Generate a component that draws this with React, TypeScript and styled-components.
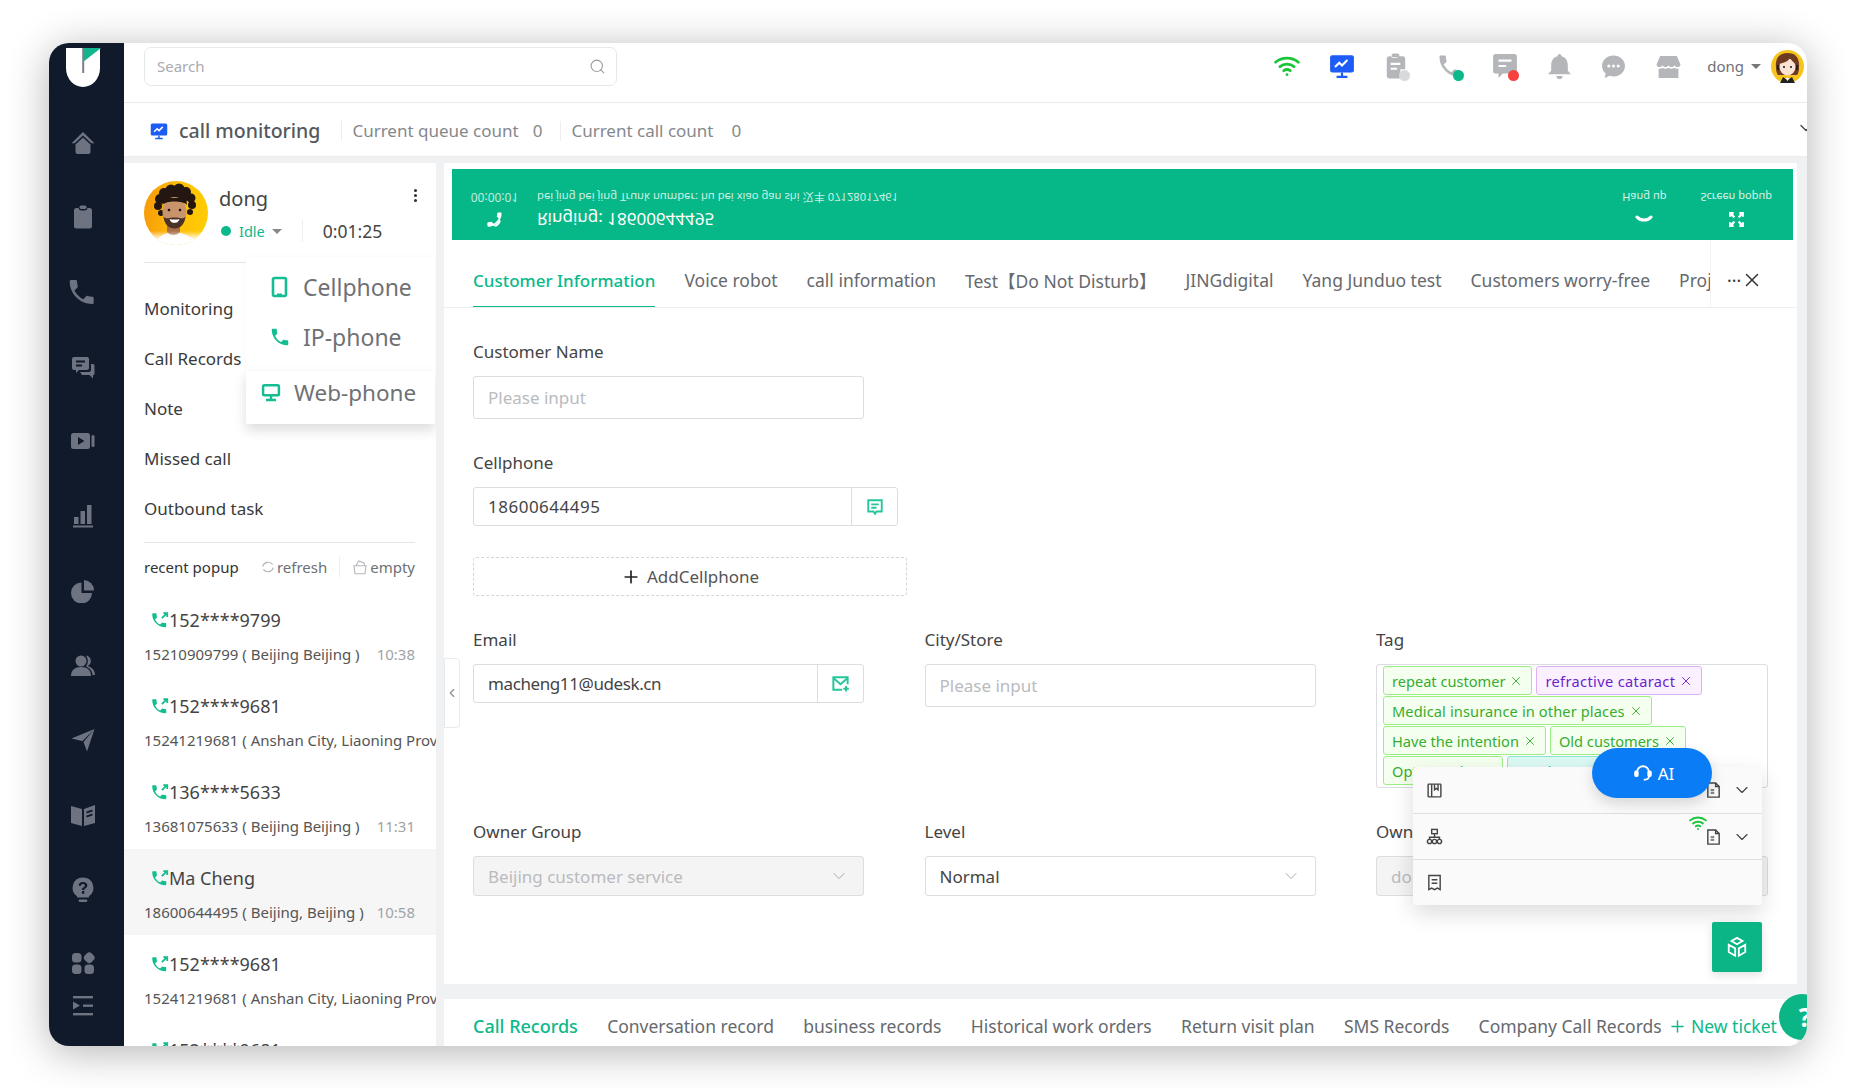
import React from 'react';
import styled, { createGlobalStyle } from 'styled-components';
import { ChevronDown, ChevronLeft, Plus, X, Search as SearchIcon } from 'lucide-react';

const GREEN = '#0bb98a';

const GlobalStyle = createGlobalStyle`
  html, body { margin: 0; padding: 0; background: #fff; }
  body { font-family: "Noto Sans", "Noto Sans CJK SC", sans-serif; color: #333; }
  * { box-sizing: border-box; }
`;

const Page = styled.div`
  width: 1856px;
  height: 1088px;
  padding: 43px 0 0 49px;
  overflow: hidden;
`;

const Window = styled.div`
  position: relative;
  display: flex;
  width: 1758px;
  height: 1003px;
  border-radius: 20px;
  overflow: hidden;
  background: #f0f1f3;
  box-shadow: 0 6px 42px rgba(0, 0, 0, 0.3);
`;

const Sidebar = styled.aside`
  width: 75px;
  flex: none;
  background: #111a2b;
  display: flex;
  flex-direction: column;
  align-items: center;
  padding-right: 7px;
  color: #6d7380;
`;

const Logo = styled.div`
  height: 62px;
  padding-top: 5px;
`;

const NavItem = styled.div<{ $h?: number }>`
  height: ${(p) => p.$h ?? 74.7}px;
  flex: none;
  display: flex;
  align-items: center;
  justify-content: center;
`;

const Content = styled.div`
  flex: 1;
  min-width: 0;
  display: flex;
  flex-direction: column;
`;

const Topbar = styled.header`
  height: 60px;
  flex: none;
  background: #fff;
  border-bottom: 1px solid #e9eaec;
  display: flex;
  align-items: center;
  padding: 0 3px 13px 20px;
`;

const SearchBox = styled.div`
  width: 473px;
  height: 39px;
  border: 1px solid #e6e7e9;
  border-radius: 7px;
  display: flex;
  align-items: center;
  justify-content: space-between;
  padding: 0 10px 0 12px;
  font-size: 15px;
  color: #a9abae;
`;

const TopIcons = styled.div`
  margin-left: auto;
  display: flex;
  align-items: center;
`;

const TopIcon = styled.div`
  position: relative;
  width: 54.4px;
  height: 30px;
  display: flex;
  align-items: center;
  justify-content: center;
`;

const Badge = styled.span<{ $color: string }>`
  position: absolute;
  left: 30px;
  top: 19px;
  width: 11px;
  height: 11px;
  border-radius: 50%;
  background: ${(p) => p.$color};
`;

const UserName = styled.div`
  display: flex;
  align-items: center;
  gap: 7px;
  margin-left: 12px;
  margin-right: 10px;
  font-size: 15px;
  color: #6f7276;
`;

const Caret = styled.span<{ $color?: string }>`
  width: 0;
  height: 0;
  border-left: 5px solid transparent;
  border-right: 5px solid transparent;
  border-top: 5px solid ${(p) => p.$color ?? '#777'};
`;

const TitleRow = styled.div`
  height: 54px;
  flex: none;
  background: #fff;
  display: flex;
  align-items: center;
  padding: 2px 0 0 26px;
  color: #85888c;
  font-size: 17px;
  border-bottom: 1px solid #ececee;
`;

const PageTitle = styled.div`
  margin-left: 11px;
  font-size: 19.5px;
  font-weight: 500;
  color: #55585c;
  margin-right: 21px;
`;

const Counter = styled.div<{ $gap: number }>`
  display: flex;
  gap: ${(p) => p.$gap}px;
  padding-left: 10px;
  margin-right: 18px;
  border-left: 1px solid #eeeeee;
  line-height: 20px;
`;

const CollapseMark = styled.div`
  margin-left: auto;
  margin-right: -9px;
  margin-bottom: 5px;
  color: #444;
  display: flex;
`;

const Body = styled.div`
  flex: 1;
  min-height: 0;
  margin-top: 6px;
  display: flex;
`;

const LeftPanel = styled.section`
  position: relative;
  width: 312px;
  flex: none;
  background: #fff;
  overflow: hidden;
`;

const Profile = styled.div`
  height: 100px;
  margin: 0 21px 0 20px;
  padding-top: 18px;
  border-bottom: 1px solid #e4e5e7;
  display: flex;
  position: relative;
`;

const Kebab = styled.div`
  position: absolute;
  right: -2px;
  top: 26px;
  display: flex;
  flex-direction: column;
  gap: 2px;
  & > i {
    width: 3px;
    height: 3px;
    border-radius: 50%;
    background: #333;
  }
`;

const ProfileText = styled.div`
  margin-left: 11px;
`;

const ProfileName = styled.div`
  font-size: 20px;
  line-height: 28px;
  margin-top: 4px;
  color: #444;
`;

const StatusRow = styled.div`
  display: flex;
  align-items: center;
  margin-top: 6px;
  height: 24px;
`;

const StatusDot = styled.span`
  width: 10px;
  height: 10px;
  border-radius: 50%;
  background: ${GREEN};
  margin-left: 2px;
  margin-right: 8px;
`;

const StatusLabel = styled.span`
  font-size: 14.5px;
  color: ${GREEN};
  margin-right: 7px;
`;

const Timer = styled.span`
  margin-left: 20px;
  padding-left: 20px;
  border-left: 1px solid #eeeeee;
  font-size: 17.5px;
  line-height: 22px;
  color: #444;
`;

const Menu = styled.nav`
  margin: 0 21px 0 20px;
  padding: 21px 0 9px;
  border-bottom: 1px solid #e4e5e7;
`;

const MenuItem = styled.div`
  height: 49.8px;
  display: flex;
  align-items: center;
  font-size: 17px;
  color: #3a3a3a;
`;

const RecentHead = styled.div`
  height: 48px;
  margin: 0 21px 0 20px;
  display: flex;
  align-items: center;
  font-size: 15px;
  color: #333;
  white-space: nowrap;
`;

const RecentTool = styled.div<{ $sep?: boolean }>`
  display: flex;
  align-items: center;
  gap: 2px;
  color: #6d7074;
  font-size: 15px;
  margin-left: ${(p) => (p.$sep ? '12px' : 'auto')};
  padding-left: ${(p) => (p.$sep ? '12px' : '0')};
  border-left: ${(p) => (p.$sep ? '1px solid #eeeeee' : 'none')};
`;

const CallList = styled.div`
  display: flex;
  flex-direction: column;
`;

const CallItem = styled.div<{ $active?: boolean }>`
  height: 86px;
  flex: none;
  padding: 17px 21px 0 20px;
  background: ${(p) => (p.$active ? '#f6f6f7' : '#fff')};
`;

const CallTitle = styled.div`
  display: flex;
  align-items: center;
  padding-left: 8px;
  height: 24px;
  font-size: 18px;
  color: #444;
`;

const CallSub = styled.div`
  margin-top: 11px;
  margin-right: -21px;
  display: flex;
  justify-content: space-between;
  font-size: 15px;
  line-height: 22px;
  color: #555;
  white-space: nowrap;
  overflow: hidden;
`;

const CallTime = styled.span`
  color: #a0a3a6;
  margin-right: 21px;
`;

const PhoneMenu = styled.div`
  position: absolute;
  left: 122px;
  top: 94px;
  width: 189px;
  font-size: 23px;
  color: #6f7175;
`;

const PhoneMenuTop = styled.div`
  background: #fff;
  height: 114px;
  padding: 5px 0 0 25px;
  box-shadow: 0 0 6px rgba(0, 0, 0, 0.03);
`;

const PhoneMenuRow = styled.div`
  height: 50px;
  display: flex;
  align-items: center;
  gap: 15px;
`;

const PhoneMenuIcon = styled.span`
  width: 17px;
  flex: none;
  display: flex;
  justify-content: center;
  & > svg { flex: none; }
`;

const PhoneMenuBottom = styled.div`
  background: #fff;
  height: 53px;
  padding: 0 0 11px 15px;
  display: flex;
  align-items: center;
  gap: 13px;
  font-size: 22.5px;
  box-shadow: 0 6px 12px rgba(0, 0, 0, 0.14);
`;

const Main = styled.main`
  position: relative;
  margin-left: 8px;
  margin-right: 10px;
  flex: 1;
  min-width: 0;
  background: #fff;
  display: flex;
  flex-direction: column;
`;

const CollapseHandle = styled.div`
  position: absolute;
  left: 0;
  top: 495px;
  width: 16px;
  height: 70px;
  background: #fff;
  border: 1px solid #e8e9eb;
  border-radius: 0 4px 4px 0;
  color: #8a8c90;
  display: flex;
  align-items: center;
  justify-content: center;
`;

const Banner = styled.div`
  margin: 6px 4px 0 8px;
  height: 71px;
  flex: none;
  background: #06b888;
  color: #fff;
  display: flex;
  padding: 0 21px;
`;

const Flip = styled.div<{ $size: number; $alpha?: number }>`
  transform: scaleY(-1);
  font-size: ${(p) => p.$size}px;
  line-height: 22px;
  white-space: nowrap;
  color: rgba(255, 255, 255, ${(p) => p.$alpha ?? 1});
`;

const BannerCol = styled.div<{ $w?: number; $center?: boolean }>`
  width: ${(p) => (p.$w ? `${p.$w}px` : 'auto')};
  padding-top: 17px;
  display: flex;
  flex-direction: column;
  align-items: ${(p) => (p.$center ? 'center' : 'flex-start')};
`;

const BannerInfo = styled(BannerCol)`
  margin-left: 21px;
`;

const BannerActions = styled.div`
  margin-left: auto;
  display: flex;
  gap: 34px;
`;

const BannerIcon = styled.div`
  height: 22px;
  display: flex;
  align-items: center;
  justify-content: center;
`;

const Tabs = styled.div`
  height: 68px;
  flex: none;
  border-bottom: 1px solid #eeeff0;
  padding: 14px 0 0 29px;
  display: flex;
  gap: 29px;
  position: relative;
  overflow: hidden;
  font-size: 17.5px;
  color: #66696d;
  white-space: nowrap;
`;

const Tab = styled.div<{ $active?: boolean }>`
  height: 54px;
  display: flex;
  align-items: center;
  font-size: ${(p) => (p.$active ? 17 : 17.5)}px;
  font-weight: ${(p) => (p.$active ? 500 : 400)};
  color: ${(p) => (p.$active ? GREEN : 'inherit')};
  border-bottom: 2px solid ${(p) => (p.$active ? GREEN : 'transparent')};
`;

const TabTail = styled.div`
  position: absolute;
  right: 0;
  top: 0;
  bottom: 0;
  width: 87px;
  background: #fff;
  border-left: 1px solid #f4f4f5;
  display: flex;
  align-items: center;
  padding: 12px 0 0 16px;
  color: #333;
`;

const Form = styled.div`
  flex: 1;
  min-height: 0;
  padding: 34px 0 0 29px;
  overflow: hidden;
`;

const FormGrid = styled.div<{ $mt?: number }>`
  display: grid;
  grid-template-columns: 391px 391px 392px;
  column-gap: 60.5px;
  margin-top: ${(p) => p.$mt ?? 0}px;
`;

const Label = styled.div`
  font-size: 17px;
  line-height: 20px;
  color: #444;
  margin-bottom: 14px;
  white-space: nowrap;
`;

const Input = styled.div<{ $disabled?: boolean; $placeholder?: boolean; $h?: number }>`
  height: ${(p) => p.$h ?? 43}px;
  border: 1px solid #dcdde0;
  border-radius: 3px;
  padding: 0 14px;
  display: flex;
  align-items: center;
  justify-content: space-between;
  font-size: 17px;
  background: ${(p) => (p.$disabled ? '#f4f4f5' : '#fff')};
  color: ${(p) => (p.$placeholder || p.$disabled ? '#b9bbbe' : '#444')};
`;

const InputGroup = styled.div<{ $w: number; $addon: number }>`
  width: ${(p) => p.$w}px;
  height: 39px;
  border: 1px solid #dcdde0;
  border-radius: 3px;
  display: grid;
  grid-template-columns: 1fr ${(p) => p.$addon}px;
  font-size: 17px;
  color: #444;
`;

const InputValue = styled.div<{ $spacing?: number }>`
  display: flex;
  align-items: center;
  padding-left: 14px;
  letter-spacing: ${(p) => p.$spacing ?? 0}px;
`;

const InputAddon = styled.div`
  border-left: 1px solid #dcdde0;
  display: flex;
  align-items: center;
  justify-content: center;
`;

const AddButton = styled.div`
  width: 434px;
  height: 39px;
  margin-top: 31px;
  border: 1px dashed #d4d5d8;
  border-radius: 3px;
  display: flex;
  align-items: center;
  justify-content: center;
  gap: 6px;
  font-size: 17px;
  color: #555;
`;

const TagBox = styled.div`
  height: 124px;
  border: 1px solid #dcdde0;
  border-radius: 3px;
  padding: 1px 6px;
  display: flex;
  flex-wrap: wrap;
  align-content: flex-start;
  gap: 1px 4px;
  overflow: hidden;
`;

const TagItem = styled.div<{ $fg: string; $bg: string; $line: string; $ls?: number }>`
  height: 29px;
  padding: 0 8px;
  border: 1px solid ${(p) => p.$line};
  border-radius: 3px;
  background: ${(p) => p.$bg};
  color: ${(p) => p.$fg};
  font-size: 14.6px;
  letter-spacing: ${(p) => p.$ls ?? 0}px;
  display: flex;
  align-items: center;
  gap: 4px;
  white-space: nowrap;
`;

const Divider = styled.div`
  height: 15px;
  flex: none;
  background: #f0f1f3;
`;

const BottomBar = styled.div`
  height: 47px;
  flex: none;
  display: flex;
  align-items: center;
  padding: 7px 0 0 29px;
  position: relative;
  overflow: hidden;
  font-size: 17.5px;
  color: #66696d;
  white-space: nowrap;
  gap: 29.3px;
`;

const BottomTab = styled.div<{ $active?: boolean }>`
  font-size: ${(p) => (p.$active ? 18 : 17.5)}px;
  font-weight: ${(p) => (p.$active ? 500 : 400)};
  color: ${(p) => (p.$active ? GREEN : 'inherit')};
`;

const NewTicket = styled.div`
  position: absolute;
  left: 1222px;
  top: 0;
  bottom: 0;
  padding: 7px 0 0 2px;
  display: flex;
  align-items: center;
  gap: 4px;
  background: #fff;
  color: ${GREEN};
  font-size: 17.5px;
`;

const FloatPanel = styled.div`
  position: absolute;
  left: 969px;
  top: 604px;
  width: 349px;
  background: #fafafa;
  box-shadow: 0 8px 22px rgba(0, 0, 0, 0.14);
  border-radius: 3px;
`;

const FloatRow = styled.div`
  height: 46px;
  display: flex;
  align-items: center;
  padding: 0 10px 0 13px;
  gap: 10px;
  position: relative;
  color: #444;
  & + & { border-top: 1px solid #dedfe1; }
`;

const FloatSpacer = styled.div`
  flex: 1;
`;

const FloatWifi = styled.div`
  position: absolute;
  left: 276px;
  top: 0;
`;

const AiButton = styled.div`
  position: absolute;
  left: 1148px;
  top: 585px;
  width: 120px;
  height: 50px;
  border-radius: 25px;
  background: #0a7cf5;
  color: #fff;
  font-size: 17px;
  display: flex;
  align-items: center;
  justify-content: center;
  gap: 6px;
  padding-left: 4px;
  box-shadow: 0 6px 14px rgba(0, 0, 0, 0.14);
`;

const CubeButton = styled.div`
  position: absolute;
  left: 1268px;
  top: 759px;
  width: 50px;
  height: 50px;
  background: #0bb586;
  border-radius: 2px;
  display: flex;
  align-items: center;
  justify-content: center;
  box-shadow: 0 3px 10px rgba(0, 0, 0, 0.12);
`;

const HelpCircle = styled.div`
  position: absolute;
  left: 1730px;
  top: 951px;
  width: 46px;
  height: 46px;
  border-radius: 50%;
  background: #0bb586;
  color: #fff;
  font-size: 26px;
  font-weight: 700;
  display: flex;
  align-items: center;
  justify-content: center;
  padding-left: 6px;
`;

const Svg: React.FC<{ size?: number; h?: number; color?: string; children: React.ReactNode }> = ({
  size = 24,
  h,
  color = 'currentColor',
  children,
}) => (
  <svg width={size} height={h ?? size} viewBox="0 0 24 24" fill={color} stroke="none">
    {children}
  </svg>
);

const PHONE =
  'M6.62 10.79c1.44 2.83 3.76 5.14 6.59 6.59l2.2-2.2c.27-.27.67-.36 1.02-.24 1.12.37 2.33.57 3.57.57.55 0 1 .45 1 1V20c0 .55-.45 1-1 1-9.39 0-17-7.61-17-17 0-.55.45-1 1-1h3.5c.55 0 1 .45 1 1 0 1.25.2 2.45.57 3.57.11.35.03.74-.25 1.02l-2.2 2.2z';

const Wifi: React.FC<{ size?: number }> = ({ size = 24 }) => (
  <svg width={size} height={size} viewBox="0 0 24 24" fill="none" stroke="#1bc63a" strokeWidth="2.6" strokeLinecap="round">
    <path d="M1.5 8.5C7.5 3.5 16.5 3.5 22.5 8.5" />
    <path d="M5.5 12.5C9.2 9.6 14.8 9.6 18.5 12.5" />
    <path d="M9 16.3C10.8 15 13.2 15 15 16.3" />
    <circle cx="12" cy="20" r="1.3" fill="#1bc63a" stroke="none" />
  </svg>
);

const ScreenChart: React.FC<{ size?: number }> = ({ size = 24 }) => (
  <svg width={size} height={size} viewBox="0 0 24 24">
    <rect x="1" y="2" width="22" height="16" rx="2" fill="#1d5cf5" />
    <path d="M5.5 13l4-4 2.5 2.5 5-5" fill="none" stroke="#fff" strokeWidth="2" />
    <path d="M12 18v3.5M7 22h10" stroke="#1d5cf5" strokeWidth="2" />
  </svg>
);

const MonitorOutline: React.FC = () => (
  <svg width="20" height="20" viewBox="0 0 24 24" fill="none" stroke="#15bd92" strokeWidth="3">
    <rect x="2.5" y="4" width="19" height="12" rx="1.5" />
    <path d="M12 16v4M6 21.5h12" />
  </svg>
);

const CallBack: React.FC = () => (
  <svg width="17" height="17" viewBox="0 0 24 24" fill="none">
    <path d={PHONE} fill="#12bd8e" transform="translate(-3 0) scale(1.1)" />
    <path d="M14 10l7-7M16 3h5.5v5.5" stroke="#12bd8e" strokeWidth="2.6" />
  </svg>
);

const ManAvatar: React.FC = () => (
  <svg width="64" height="64" viewBox="0 0 64 64">
    <defs>
      <linearGradient id="sky" x1="0" y1="0.4" x2="1" y2="0.5">
        <stop offset="0" stopColor="#f79a08" />
        <stop offset="0.5" stopColor="#ffbe0a" />
        <stop offset="1" stopColor="#ffcc00" />
      </linearGradient>
      <linearGradient id="fade" x1="0" y1="0" x2="0" y2="1">
        <stop offset="0.78" stopColor="#fff" stopOpacity="0" />
        <stop offset="0.92" stopColor="#fff" stopOpacity="1" />
      </linearGradient>
      <clipPath id="round">
        <circle cx="32" cy="32" r="32" />
      </clipPath>
    </defs>
    <g clipPath="url(#round)">
      <rect width="64" height="64" fill="url(#sky)" />
      <path d="M11 66c1-10 8-14 19-15 11 1 21 5 24 15z" fill="#f4f6f4" />
      <path d="M23 44h13v7c-3 4-10 4-13 0z" fill="#a96f49" />
      {[
        [16, 18, 5],
        [20, 12, 5],
        [27, 9, 5.5],
        [35, 8, 5.5],
        [42, 11, 5],
        [47, 17, 4.5],
        [14, 25, 4],
        [48, 24, 4],
        [46, 31, 3],
        [17, 32, 3],
        [30, 14, 8],
        [38, 15, 7],
        [23, 16, 7],
      ].map(([cx, cy, r], i) => (
        <circle key={i} cx={cx} cy={cy} r={r} fill="#241611" />
      ))}
      <ellipse cx="30.5" cy="31" rx="12" ry="15" fill="#c9946c" />
      <path d="M18 24c3-4 20-5 25 0l-1-7H20z" fill="#241611" />
      <path d="M19.5 36c1 7 5 11.5 11 11.5s10-4.5 11-11.5c-2 1.5-4 1.5-6 1-3-.6-7-.6-10 0-2 .5-4 .5-6-1z" fill="#4a3226" />
      <path d="M25.5 38c2.5.8 7.5.8 10 0-.8 3-2.5 3.8-5 3.8s-4.2-.8-5-3.8z" fill="#fff" />
      <circle cx="25" cy="29" r="1.3" fill="#1c110d" />
      <circle cx="36" cy="29" r="1.3" fill="#1c110d" />
      <rect width="64" height="64" fill="url(#fade)" />
    </g>
  </svg>
);

const GirlAvatar: React.FC = () => (
  <svg width="33" height="33" viewBox="0 0 33 33">
    <circle cx="16.5" cy="16.5" r="16.5" fill="#f6c51d" />
    <path d="M5 18C4 6 10 3 16.5 3S29 6 28 18c0 3-1 6-2 7H7c-1-1-2-4-2-7z" fill="#6e3a22" />
    <ellipse cx="16.5" cy="17" rx="8" ry="8.5" fill="#fbe2d2" />
    <path d="M8 14c3-1 9-2 11-6 2 3 4 5 6 6l-1-6-7-3-7 3z" fill="#6e3a22" />
    <circle cx="13" cy="17" r="1.1" fill="#222" />
    <circle cx="20" cy="17" r="1.1" fill="#222" />
    <path d="M7 15v5M26 15v5" stroke="#222" strokeWidth="2" />
    <path d="M9 33l3-6 4.5 3 4.5-3 3 6z" fill="#222" />
    <path d="M14.5 28h4l-2 3z" fill="#fff" />
  </svg>
);

const DocIcon: React.FC = () => (
  <svg width="17" height="18" viewBox="0 0 24 24" fill="none" stroke="#444" strokeWidth="2">
    <path d="M4 2h11l5 5v15H4z" />
    <path d="M15 2v5h5" />
    <path d="M8 12h5M8 16h5" strokeWidth="3" stroke="#888" />
  </svg>
);

const navIcons = [
  <Svg key="home">
    <path d="M12 1L.5 12.2h3.2L12 4.6l8.3 7.6h3.2z" />
    <path d="M12 6.6l7.5 6.8V21a2 2 0 0 1-2 2h-11a2 2 0 0 1-2-2v-7.6z" />
  </Svg>,
  <Svg key="clip">
    <path d="M7.5 3H5.5A2.5 2.5 0 0 0 3 5.5V21a2.5 2.5 0 0 0 2.5 2.5h13A2.5 2.5 0 0 0 21 21V5.5A2.5 2.5 0 0 0 18.5 3h-2a3 3 0 0 1-3 2.5h-3A3 3 0 0 1 7.5 3z" />
    <rect x="8.5" y="0.5" width="7" height="3.5" rx="1.7" />
  </Svg>,
  <Svg key="phone" size={32}>
    <path d={PHONE} transform="translate(-1 0)" />
  </Svg>,
  <Svg key="chat">
    <path d="M3 2h13a2 2 0 0 1 2 2v9a2 2 0 0 1-2 2H8l-3 3v-3H3a2 2 0 0 1-2-2V4a2 2 0 0 1 2-2z" />
    <path d="M5 6.5h9M5 10.5h6" stroke="#111a2b" strokeWidth="2" />
    <path d="M20 9h2a1.5 1.5 0 0 1 1.5 1.5v8A1.5 1.5 0 0 1 22 20v3.5L18.5 20H11l-2-3h9a2 2 0 0 0 2-2z" />
  </Svg>,
  <Svg key="video">
    <path d="M2.5 4h14A2.5 2.5 0 0 1 19 6.5v11a2.5 2.5 0 0 1-2.5 2.5h-14A2.5 2.5 0 0 1 0 17.5v-11A2.5 2.5 0 0 1 2.5 4zM7 8v8l6.5-4z" fillRule="evenodd" />
    <rect x="20.5" y="6" width="3" height="12" rx="1.5" />
  </Svg>,
  <Svg key="chart">
    <rect x="3" y="13" width="4.5" height="7" />
    <rect x="9.5" y="7" width="4.5" height="13" />
    <rect x="16" y="1" width="4.5" height="19" />
    <rect x="2" y="21.5" width="20" height="2" />
  </Svg>,
  <Svg key="pie">
    <path d="M10.5 3.5v10.5H21A10.5 10.5 0 1 1 10.5 3.5z" />
    <path d="M13 1a10.5 10.5 0 0 1 10 10.5H13z" />
  </Svg>,
  <Svg key="people">
    <circle cx="10" cy="8" r="5.5" />
    <path d="M0 23c0-6 4-9 10-9s10 3 10 9z" />
    <path d="M15 2.5a5.5 5.5 0 0 1 1.5 10.5c4 1 7.5 4 7.5 9h-2.5c0-4-3-7-6.5-8.5 2.5-3.5 2.5-7.5 0-11z" />
  </Svg>,
  <Svg key="send">
    <path d="M23.5 1L.5 10.5 11 13l.5 0zM23.5 1L12.5 14l3.5 9.5z" />
  </Svg>,
  <Svg key="book">
    <path d="M0 3l11 3v17L0 20z" />
    <path d="M13 6l11-4v18l-11 3zM15.5 8.5v2l6-2v-2zM15.5 12.5v2l6-2v-2z" fillRule="evenodd" />
  </Svg>,
  <Svg key="help" size={26}>
    <path d="M12 .5a9.5 9.5 0 0 1 5.5 17.3V19h-11v-1.2A9.5 9.5 0 0 1 12 .5zM11 13v2.5h2.2V13zM12 4.5c-2.5 0-4 1.5-4 3.5h2.2c0-1 .7-1.5 1.8-1.5s1.8.6 1.8 1.4c0 1.7-2.8 1.6-2.8 4.1h2.2c0-1.8 2.8-2 2.8-4.2 0-2.2-1.8-3.3-4-3.3z" fillRule="evenodd" />
    <rect x="8" y="20.8" width="8" height="2.2" rx="1.1" />
  </Svg>,
  <Svg key="apps">
    <rect x="1" y="2" width="9.5" height="9.5" rx="3.5" />
    <rect x="13.5" y="2" width="9.5" height="9.5" rx="3.5" transform="rotate(45 18.25 6.75)" />
    <rect x="1" y="13.5" width="9.5" height="9.5" rx="3.5" />
    <rect x="13.5" y="13.5" width="9.5" height="9.5" rx="3.5" />
  </Svg>,
  <Svg key="menu">
    <rect x="2" y="2" width="20" height="2.4" />
    <rect x="12" y="10.5" width="10" height="2.4" />
    <rect x="2" y="19" width="20" height="2.4" />
    <path d="M2 7.5l7 4-7 4z" />
  </Svg>,
];

const menuItems = ['Monitoring', 'Call Records', 'Note', 'Missed call', 'Outbound task'];

const calls = [
  { title: '152****9799', sub: '15210909799 ( Beijing Beijing )', time: '10:38' },
  { title: '152****9681', sub: '15241219681 ( Anshan City, Liaoning Province )', time: '' },
  { title: '136****5633', sub: '13681075633 ( Beijing Beijing )', time: '11:31' },
  { title: 'Ma Cheng', sub: '18600644495 ( Beijing, Beijing )', time: '10:58', active: true },
  { title: '152****9681', sub: '15241219681 ( Anshan City, Liaoning Province )', time: '' },
  { title: '152****9681', sub: '15241219681 ( Anshan City, Liaoning Province )', time: '' },
];

const tabs = [
  'Customer Information',
  'Voice robot',
  'call information',
  'Test【Do Not Disturb】',
  'JINGdigital',
  'Yang Junduo test',
  'Customers worry-free',
  'Project',
];

const bottomTabs = [
  'Call Records',
  'Conversation record',
  'business records',
  'Historical work orders',
  'Return visit plan',
  'SMS Records',
  'Company Call Records',
];

const GREEN_TAG = { $fg: '#35ad2f', $bg: '#f5fff0', $line: '#9bee84' };
const PURPLE_TAG = { $fg: '#6d1fc9', $bg: '#faf0ff', $line: '#dcb2f5', $ls: 0.35 };
const WIDE_GREEN_TAG = { ...GREEN_TAG, $ls: 0.12 };
const TEAL_TAG = { $fg: '#14a6a0', $bg: '#dcf9f4', $line: '#86e6d8' };

const tags = [
  { text: 'repeat customer', style: GREEN_TAG },
  { text: 'refractive cataract', style: PURPLE_TAG },
  { text: 'Medical insurance in other places', style: WIDE_GREEN_TAG },
  { text: 'Have the intention', style: GREEN_TAG },
  { text: 'Old customers', style: GREEN_TAG },
  { text: 'Optometrist', style: GREEN_TAG },
  { text: 'Inquiry customer', style: TEAL_TAG },
];

const App: React.FC = () => (
  <Page>
    <GlobalStyle />
    <Window>
      <Sidebar>
        <Logo>
          <svg width="36" height="40" viewBox="0 0 36 40">
            <path d="M1 0h34v20a17 19 0 0 1-34 0z" fill="#fff" />
            <path d="M18 0h18L18 14z" fill="#12b58c" />
            <rect x="17.2" y="0" width="2" height="25" fill="#7d818a" />
          </svg>
        </Logo>
        <NavItem $h={0.3} />
        {navIcons.slice(0, 11).map((icon, i) => (
          <NavItem key={i}>{icon}</NavItem>
        ))}
        <NavItem $h={72}>{navIcons[11]}</NavItem>
        <NavItem $h={14}>{navIcons[12]}</NavItem>
      </Sidebar>

      <Content>
        <Topbar>
          <SearchBox>
            Search
            <SearchIcon size={17} color="#9a9c9f" strokeWidth={1.5} />
          </SearchBox>
          <TopIcons>
            <TopIcon><Wifi size={26} /></TopIcon>
            <TopIcon><ScreenChart size={26} /></TopIcon>
            <TopIcon>
              <Svg color="#b4b6b9" size={26}>
                <path d="M7.5 3H6a2.5 2.5 0 0 0-2.5 2.5V21A2.5 2.5 0 0 0 6 23.5h10V5a2 2 0 0 0-1-2h-1a2 2 0 0 1-2 1.5h-3A2 2 0 0 1 7.5 3z" />
                <path d="M15 3h3a2.5 2.5 0 0 1 2.5 2.5V15h-5z" />
                <rect x="8" y="0.5" width="7" height="3.5" rx="1.5" />
                <path d="M7 10h9M7 14.5h6" stroke="#fff" strokeWidth="2" />
              </Svg>
              <Badge $color="#d9dadc" />
            </TopIcon>
            <TopIcon>
              <Svg color="#b4b6b9" size={28}><path d={PHONE} /></Svg>
              <Badge $color={GREEN} />
            </TopIcon>
            <TopIcon>
              <Svg color="#b4b6b9" size={26}>
                <path d="M3.5 1h17A2.5 2.5 0 0 1 23 3.5v13a2.5 2.5 0 0 1-2.5 2.5H10l-4 4v-4H3.5A2.5 2.5 0 0 1 1 16.5v-13A2.5 2.5 0 0 1 3.5 1z" />
                <path d="M6 7h12M6 12h7" stroke="#fff" strokeWidth="2" />
              </Svg>
              <Badge $color="#f6413f" />
            </TopIcon>
            <TopIcon>
              <Svg color="#b4b6b9" size={25}>
                <path d="M12 0c1.2 0 1.7.8 1.8 2.2C18 3 20 6.5 20 11v5l3 3.5H1L4 16v-5c0-4.5 2-8 6.2-8.8C10.3.8 10.8 0 12 0z" />
                <path d="M9 21h6a3 3 0 0 1-6 0z" />
              </Svg>
            </TopIcon>
            <TopIcon>
              <Svg color="#b4b6b9" size={25}>
                <path d="M12 1.5c6 0 11 4.3 11 10s-5 10-11 10c-1.3 0-2.5-.2-3.6-.6L3.5 23l1-4.3C2.3 16.8 1 14.3 1 11.5c0-5.7 5-10 11-10z" />
                <circle cx="7.5" cy="11.5" r="1.5" fill="#fff" />
                <circle cx="12" cy="11.5" r="1.5" fill="#fff" />
                <circle cx="16.5" cy="11.5" r="1.5" fill="#fff" />
              </Svg>
            </TopIcon>
            <TopIcon>
              <Svg color="#b4b6b9" size={25}>
                <path d="M4 2h16l3.5 8c0 1.5-1.5 2.5-3 2.5-1.3 0-2.3-.7-2.8-1.7-.5 1-1.5 1.7-2.8 1.7s-2.4-.7-2.9-1.7c-.5 1-1.6 1.7-2.9 1.7S6.8 11.8 6.3 10.8c-.5 1-1.5 1.7-2.8 1.7-1.5 0-3-1-3-2.5z" />
                <path d="M2.5 14c1.5.3 3 0 3.8-.7 1.5 1.2 4 1.2 5.7 0 1.7 1.2 4.2 1.2 5.7 0 .8.7 2.3 1 3.8.7v9h-19z" />
              </Svg>
            </TopIcon>
            <UserName>dong<Caret /></UserName>
            <GirlAvatar />
          </TopIcons>
        </Topbar>

        <TitleRow>
          <ScreenChart size={18} />
          <PageTitle>call monitoring</PageTitle>
          <Counter $gap={14}>Current queue count <span>0</span></Counter>
          <Counter $gap={18}>Current call count <span>0</span></Counter>
          <CollapseMark><ChevronDown size={20} strokeWidth={1.6} /></CollapseMark>
        </TitleRow>

        <Body>
          <LeftPanel>
            <Profile>
              <ManAvatar />
              <ProfileText>
                <ProfileName>dong</ProfileName>
                <StatusRow>
                  <StatusDot />
                  <StatusLabel>Idle</StatusLabel>
                  <Caret $color="#888" />
                  <Timer>0:01:25</Timer>
                </StatusRow>
              </ProfileText>
              <Kebab><i /><i /><i /></Kebab>
            </Profile>
            <Menu>
              {menuItems.map((m) => (
                <MenuItem key={m}>{m}</MenuItem>
              ))}
            </Menu>
            <RecentHead>
              recent popup
              <RecentTool>
                <svg width="14" height="14" viewBox="0 0 24 24" fill="none" stroke="#b5b7ba" strokeWidth="2">
                  <path d="M20 8a9.5 9.5 0 0 0-17 3M4 16a9.5 9.5 0 0 0 17-3" />
                </svg>
                refresh
              </RecentTool>
              <RecentTool $sep>
                <svg width="16" height="16" viewBox="0 0 24 24" fill="none" stroke="#b5b7ba" strokeWidth="1.6">
                  <path d="M3 10h18l-1.5 12h-15zM6 10l4-7 8 3 1 4" />
                </svg>
                empty
              </RecentTool>
            </RecentHead>
            <CallList>
              {calls.map((c, i) => (
                <CallItem key={i} $active={c.active}>
                  <CallTitle>
                    <CallBack />
                    {c.title}
                  </CallTitle>
                  <CallSub>
                    <span>{c.sub}</span>
                    {c.time && <CallTime>{c.time}</CallTime>}
                  </CallSub>
                </CallItem>
              ))}
            </CallList>
            <PhoneMenu>
              <PhoneMenuTop>
                <PhoneMenuRow>
                  <PhoneMenuIcon>
                    <svg width="17" height="22" viewBox="0 0 17 22" fill="none" stroke="#15bd92" strokeWidth="2.6">
                      <rect x="2" y="2" width="13" height="18" rx="1.5" />
                      <path d="M6 19h5" strokeWidth="3" />
                    </svg>
                  </PhoneMenuIcon>
                  Cellphone
                </PhoneMenuRow>
                <PhoneMenuRow>
                  <PhoneMenuIcon>
                    <Svg color="#15bd92" size={22}><path d={PHONE} /></Svg>
                  </PhoneMenuIcon>
                  IP-phone
                </PhoneMenuRow>
              </PhoneMenuTop>
              <PhoneMenuBottom>
                <MonitorOutline />
                Web-phone
              </PhoneMenuBottom>
            </PhoneMenu>
          </LeftPanel>

          <Main>
            <CollapseHandle><ChevronLeft size={14} /></CollapseHandle>
            <Banner>
              <BannerCol $w={43} $center>
                <Flip $size={12} $alpha={0.75}>00:00:01</Flip>
                <BannerIcon>
                  <svg width="19" height="19" viewBox="0 0 24 24" fill="#fff">
                    <path d={PHONE} transform="translate(24 0) scale(-1 1)" />
                    <path d="M10 20c4-1 7-4 8-8l2 2c-1 3-3 6-6 7z" />
                  </svg>
                </BannerIcon>
              </BannerCol>
              <BannerInfo>
                <Flip $size={11.2} $alpha={0.8}>bei jing bei jing  Trunk number: hu bei xiao gan shi 汉丰 07128017461</Flip>
                <Flip $size={17}>Ringing:  18600644495</Flip>
              </BannerInfo>
              <BannerActions>
                <BannerCol $center>
                  <Flip $size={11} $alpha={0.85}>Hang up</Flip>
                  <BannerIcon>
                    <svg width="18" height="10" viewBox="0 0 18 10" fill="none" stroke="#fff" strokeWidth="3" strokeLinecap="round">
                      <path d="M2 3c3 4 11 4 14 0" />
                    </svg>
                  </BannerIcon>
                </BannerCol>
                <BannerCol $center>
                  <Flip $size={11} $alpha={0.85}>Screen popup</Flip>
                  <BannerIcon>
                    <svg width="17" height="17" viewBox="0 0 24 24" fill="none" stroke="#fff" strokeWidth="3">
                      <path d="M3 8V3h5M21 8V3h-5M3 16v5h5M21 16v5h-5M4 4l5 5M20 4l-5 5M4 20l5-5M20 20l-5-5" />
                    </svg>
                  </BannerIcon>
                </BannerCol>
              </BannerActions>
            </Banner>

            <Tabs>
              {tabs.map((t, i) => (
                <Tab key={t} $active={i === 0}>{t}</Tab>
              ))}
              <TabTail>
                <span>···</span>
                <X size={22} strokeWidth={1.6} />
              </TabTail>
            </Tabs>

            <Form>
              <Label>Customer Name</Label>
              <FormGrid>
                <Input $placeholder>Please input</Input>
              </FormGrid>
              <FormGrid $mt={34}>
                <div>
                  <Label>Cellphone</Label>
                  <InputGroup $w={425} $addon={46}>
                    <InputValue $spacing={0.5}>18600644495</InputValue>
                    <InputAddon>
                      <svg width="18" height="18" viewBox="0 0 24 24" fill="none" stroke="#26c69c" strokeWidth="2.5">
                        <path d="M3 3h18v15h-7l-2 3-2-3H3z" />
                        <path d="M7 8.5h10M7 13h7" />
                      </svg>
                    </InputAddon>
                  </InputGroup>
                </div>
              </FormGrid>
              <AddButton><Plus size={20} color="#222" />AddCellphone</AddButton>
              <FormGrid $mt={34}>
                <div>
                  <Label>Email</Label>
                  <InputGroup $w={391} $addon={46}>
                    <InputValue $spacing={-0.4}>macheng11@udesk.cn</InputValue>
                    <InputAddon>
                      <svg width="19" height="19" viewBox="0 0 24 24" fill="none" stroke="#26c69c" strokeWidth="2.5">
                        <path d="M21 13V4H3v16h11" />
                        <path d="M3 5l9 8 9-8M19 15v7M15.5 18.5h7" />
                      </svg>
                    </InputAddon>
                  </InputGroup>
                </div>
                <div>
                  <Label>City/Store</Label>
                  <Input $placeholder>Please input</Input>
                </div>
                <div>
                  <Label>Tag</Label>
                  <TagBox>
                    {tags.map((t) => (
                      <TagItem key={t.text} {...t.style}>
                        {t.text}
                        <X size={14} strokeWidth={1.6} />
                      </TagItem>
                    ))}
                  </TagBox>
                </div>
              </FormGrid>
              <FormGrid $mt={34}>
                <div>
                  <Label>Owner Group</Label>
                  <Input $disabled $h={40}>
                    Beijing customer service
                    <ChevronDown size={20} strokeWidth={1} color="#999" />
                  </Input>
                </div>
                <div>
                  <Label>Level</Label>
                  <Input $h={40}>
                    Normal
                    <ChevronDown size={20} strokeWidth={1} color="#999" />
                  </Input>
                </div>
                <div>
                  <Label>Owner</Label>
                  <Input $disabled $h={40}>dong</Input>
                </div>
              </FormGrid>
            </Form>

            <Divider />

            <BottomBar>
              {bottomTabs.map((t, i) => (
                <BottomTab key={t} $active={i === 0}>{t}</BottomTab>
              ))}
              <NewTicket><Plus size={19} strokeWidth={1.8} />New ticket</NewTicket>
            </BottomBar>

            <FloatPanel>
              <FloatRow>
                <svg width="17" height="17" viewBox="0 0 24 24" fill="none" stroke="#444" strokeWidth="2">
                  <rect x="3" y="3" width="18" height="18" rx="1" />
                  <path d="M8 3v18M12 3v8l2.5-2 2.5 2V3" />
                </svg>
                <FloatSpacer />
                <DocIcon />
                <ChevronDown size={20} strokeWidth={1.4} />
              </FloatRow>
              <FloatRow>
                <svg width="17" height="17" viewBox="0 0 24 24" fill="none" stroke="#444" strokeWidth="2">
                  <rect x="8" y="2" width="8" height="6" />
                  <path d="M12 8v5M5 17v-4h14v4" />
                  <circle cx="5" cy="19" r="3" />
                  <circle cx="12" cy="19" r="3" />
                  <circle cx="19" cy="19" r="3" />
                </svg>
                <FloatWifi><Wifi size={18} /></FloatWifi>
                <FloatSpacer />
                <DocIcon />
                <ChevronDown size={20} strokeWidth={1.4} />
              </FloatRow>
              <FloatRow>
                <svg width="17" height="17" viewBox="0 0 24 24" fill="none" stroke="#444" strokeWidth="2">
                  <path d="M4 2h16v20l-4-2-4 2-4-2-4 2z" />
                  <path d="M8 8h8M8 13h8" />
                </svg>
              </FloatRow>
            </FloatPanel>

            <AiButton>
              <svg width="18" height="18" viewBox="0 0 24 24" fill="none" stroke="#fff" strokeWidth="2.4">
                <path d="M4 14v-3a8 8 0 0 1 16 0v3" />
                <rect x="1.5" y="10" width="3.5" height="6" rx="1" fill="#fff" />
                <rect x="19" y="10" width="3.5" height="6" rx="1" fill="#fff" />
                <path d="M20 16c0 3-3 5-7 5" />
              </svg>
              AI
            </AiButton>
            <CubeButton>
              <svg width="22" height="22" viewBox="0 0 24 24" fill="none" stroke="#fff" strokeWidth="2">
                <path d="M12 2l6 3.5-6 3.5-6-3.5z" />
                <path d="M3 9.5l7 4v8l-7-4zM21 9.5l-7 4v8l7-4z" />
              </svg>
            </CubeButton>
          </Main>
        </Body>
      </Content>
      <HelpCircle>?</HelpCircle>
    </Window>
  </Page>
);

export default App;
